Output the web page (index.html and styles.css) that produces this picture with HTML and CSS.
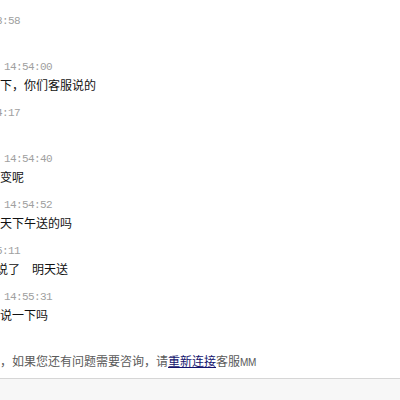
FILE: index.html
```html
<!DOCTYPE html>
<html lang="zh-CN">
<head>
<meta charset="utf-8">
<title>聊天记录</title>
<link rel="stylesheet" href="styles.css">
</head>
<body>
<div class="page">
  <div class="log">
    <div class="item agent">
      <div class="ts">14:53:58</div>
      <div class="msg">&nbsp;</div>
    </div>
    <div class="item">
      <div class="ts">14:54:00</div>
      <div class="msg">下，你们客服说的</div>
    </div>
    <div class="item agent">
      <div class="ts">14:54:17</div>
      <div class="msg">&nbsp;</div>
    </div>
    <div class="item">
      <div class="ts">14:54:40</div>
      <div class="msg">变呢</div>
    </div>
    <div class="item">
      <div class="ts">14:54:52</div>
      <div class="msg">天下午送的吗</div>
    </div>
    <div class="item agent">
      <div class="ts">14:55:11</div>
      <div class="msg">说了<span class="gap"></span>明天送</div>
    </div>
    <div class="item">
      <div class="ts">14:55:31</div>
      <div class="msg">说一下吗</div>
    </div>
    <div class="sys">，如果您还有问题需要咨询，请<a href="#" class="link">重新连接</a>客服<span class="mm">MM</span></div>
  </div>
  <div class="footer"></div>
</div>
</body>
</html>
```
FILE: styles.css
```css
html, body {
  margin: 0;
  padding: 0;
  background: #ffffff;
}
body {
  width: 400px;
  height: 400px;
  overflow: hidden;
  font-family: "Noto Sans CJK SC", "Noto Sans", sans-serif;
}
.page {
  display: flex;
  flex-direction: column;
  height: 400px;
}
.log {
  display: flex;
  flex-direction: column;
  gap: 10px;
  padding-top: 12px;
  padding-bottom: 8px;
  border-bottom: 1px solid #d6d6d6;
  overflow: hidden;
}
.item {
  display: flex;
  flex-direction: column;
}
.ts {
  height: 18px;
  line-height: 18px;
  font-family: "Liberation Mono", "DejaVu Sans Mono", monospace;
  font-size: 11px;
  letter-spacing: -0.6px;
  color: #a0a0a0;
  padding-left: 4px;
  white-space: nowrap;
}
.agent .ts {
  padding-left: 0;
  margin-left: -28px;
}
.msg {
  height: 18px;
  line-height: 18px;
  font-size: 12px;
  color: #111111;
  white-space: nowrap;
}
.agent .msg {
  margin-left: -4px;
}
.gap {
  display: inline-block;
  width: 12px;
}
.sys {
  margin-top: 18px;
  height: 18px;
  line-height: 18px;
  font-size: 12px;
  color: #5a5a5a;
  white-space: nowrap;
}
.link {
  color: #14146e;
  text-decoration: underline;
}
.mm {
  font-family: "Liberation Sans", sans-serif;
  font-size: 10px;
  letter-spacing: -0.3px;
}
.footer {
  flex: 1;
  background: #f7f7f7;
}
```
